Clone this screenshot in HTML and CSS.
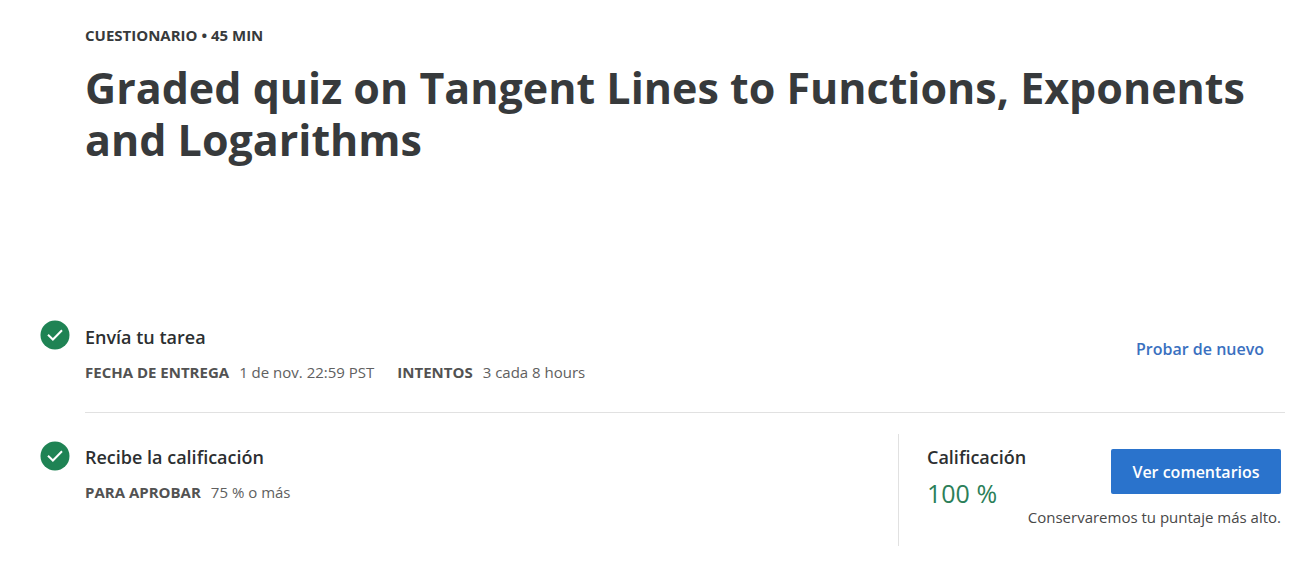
FILE: index.html
```html
<!DOCTYPE html>
<html lang="es">
<head>
<meta charset="utf-8">
<title>Graded quiz</title>
<link rel="stylesheet" href="styles.css">
</head>
<body>
<main class="page">
  <header class="header">
    <p class="kind">CUESTIONARIO • 45 MIN</p>
    <h1 class="title">Graded quiz on Tangent Lines to Functions, Exponents and Logarithms</h1>
  </header>
  <section class="step">
    <svg class="check" viewBox="0 0 30 30" aria-hidden="true"><circle cx="15" cy="15" r="14.5"/><path d="M8 14.7l4.9 4.8L22 10.2"/></svg>
    <div class="step-body submit">
      <div class="info">
        <h2 class="step-title">Envía tu tarea</h2>
        <dl class="facts">
          <div class="fact"><dt>FECHA DE ENTREGA</dt><dd>1 de nov. 22:59 PST</dd></div>
          <div class="fact"><dt>INTENTOS</dt><dd>3 cada 8 hours</dd></div>
        </dl>
      </div>
      <button class="retry" type="button">Probar de nuevo</button>
    </div>
  </section>
  <section class="step receive">
    <svg class="check" viewBox="0 0 30 30" aria-hidden="true"><circle cx="15" cy="15" r="14.5"/><path d="M8 14.7l4.9 4.8L22 10.2"/></svg>
    <div class="step-body">
      <div class="info">
        <h2 class="step-title">Recibe la calificación</h2>
        <dl class="facts">
          <div class="fact"><dt>PARA APROBAR</dt><dd>75 % o más</dd></div>
        </dl>
      </div>
      <div class="grade">
        <div class="grade-row">
          <div class="grade-info">
            <h2 class="step-title">Calificación</h2>
            <p class="score">100 %</p>
          </div>
          <button class="feedback" type="button">Ver comentarios</button>
        </div>
        <p class="note">Conservaremos tu puntaje más alto.</p>
      </div>
    </div>
  </section>
</main>
</body>
</html>
```
FILE: styles.css
```css
* { box-sizing: border-box; }
body, h1, h2, p, dl, dd { margin: 0; }
body {
  background: #fff;
  color: #373a3c;
  font-family: "Open Sans", sans-serif;
  font-size: 15px;
  line-height: 20px;
}
button { font: inherit; cursor: pointer; }
.page { padding: 25px 17px 20px 40px; }
.header { min-height: 273px; padding-left: 45px; }
.kind { font-weight: 700; }
.title {
  margin-top: 17px;
  font-size: 43px;
  font-weight: 700;
  line-height: 52px;
}
.step { display: flex; gap: 15px; }
.check { flex: none; width: 30px; height: 30px; margin-top: 22px; }
.check circle { fill: #1f8354; }
.check path { fill: none; stroke: #fff; stroke-width: 2; }
.step-body {
  flex: 1;
  display: flex;
  justify-content: space-between;
}
.submit { min-height: 115px; align-items: flex-start; border-bottom: 1px solid #e1e1e1; }
.info { padding-top: 27px; }
.step-title { font-size: 18px; font-weight: 600; line-height: 24px; color: #2c2f31; }
.facts { display: flex; gap: 23px; margin-top: 13px; }
.fact { display: flex; gap: 10px; }
.fact dt { font-weight: 700; color: #525252; }
.fact dd { color: #606060; }
.retry {
  margin: 33px 21px 0 0;
  padding: 8px 0;
  border: 0;
  background: none;
  color: #3a70c0;
  font-size: 16px;
  font-weight: 600;
}
.receive .check { margin-top: 28px; }
.receive .info { padding-top: 32px; }
.grade {
  width: 387px;
  margin-top: 21px;
  padding: 11px 4px 19px 28px;
  border-left: 1px solid #e1e1e1;
}
.grade-row { display: flex; justify-content: space-between; }
.score { font-size: 25px; line-height: 32px; margin-top: 8px; color: #2c7f59; }
.feedback {
  width: 170px;
  height: 45px;
  margin-top: 4px;
  border: 0;
  border-radius: 2px;
  background: #2a73cc;
  color: #fff;
  font-size: 16px;
  font-weight: 600;
}
.note { margin-top: -2px; text-align: right; color: #484848; }
```
